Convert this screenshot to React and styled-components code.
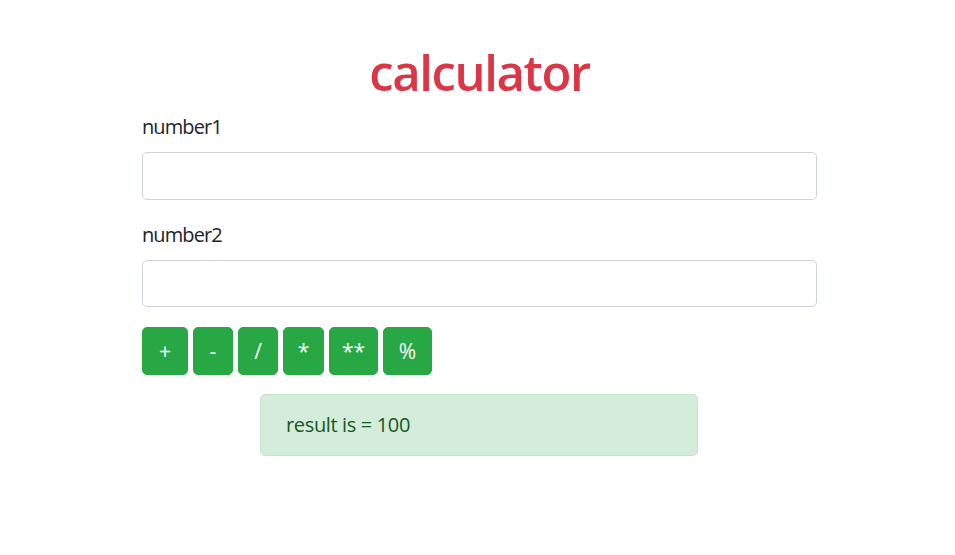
import React from 'react';
import styled, { createGlobalStyle } from 'styled-components';

const GlobalStyle = createGlobalStyle`
    body{
        margin: 0;
        background: #fff;
        font-family: "Open Sans", "Noto Sans", "Liberation Sans", sans-serif;
        color: #212529;
    }
`;

const ops = [
    { label: '+', width: 46 },
    { label: '-', width: 40 },
    { label: '/', width: 40 },
    { label: '*', width: 41 },
    { label: '**', width: 49 },
    { label: '%', width: 49 },
];

export default function App() {
    return (
        <>
            <GlobalStyle />
            <Page>
                <Container>
                    <Title>calculator</Title>
                    <Group>
                        <Label htmlFor="n1">number1</Label>
                        <Input id="n1" type="text" />
                    </Group>
                    <Group>
                        <Label htmlFor="n2">number2</Label>
                        <Input id="n2" type="text" />
                    </Group>
                    <Buttons>
                        {ops.map((op) => (
                            <OpButton key={op.label} width={op.width}>{op.label}</OpButton>
                        ))}
                    </Buttons>
                    <Alert>result is = 100</Alert>
                </Container>
            </Page>
        </>
    );
}

const Page = styled.div`
    padding-top: 42px;
`;
const Container = styled.div`
    width: 675px;
    margin-left: 142px;
`;
const Title = styled.h1`
    margin: 0 0 10px;
    font-size: 49px;
    line-height: 60px;
    font-weight: 600;
    letter-spacing: -1.4px;
    color: #dc3545;
    text-align: center;
`;
const Group = styled.div`
    margin-bottom: 20px;
`;
const Label = styled.label`
    display: block;
    font-size: 20px;
    line-height: 30px;
    letter-spacing: -0.9px;
    margin-bottom: 10px;
    color: #212529;
`;
const Input = styled.input`
    display: block;
    box-sizing: border-box;
    width: 100%;
    height: 47.5px;
    padding: 7px 15px;
    font-size: 20px;
    font-family: inherit;
    border: 1px solid #ced4da;
    border-radius: 5px;
    background: #fff;
    outline: none;
`;
const Buttons = styled.div`
    display: flex;
    gap: 5px;
`;
const OpButton = styled.button`
    box-sizing: border-box;
    width: ${({ width }) => width}px;
    height: 47.5px;
    padding: 0;
    border: 1px solid #28a745;
    border-radius: 5px;
    background: #28a745;
    color: #fff;
    font-family: inherit;
    font-size: 21px;
    line-height: 30px;
    cursor: pointer;
`;
const Alert = styled.div`
    box-sizing: border-box;
    width: 438px;
    margin: 19.5px 0 0 118px;
    padding: 15px 25px;
    font-size: 20px;
    line-height: 30px;
    letter-spacing: -0.35px;
    color: #155724;
    background: #d4edda;
    border: 1px solid #c3e6cb;
    border-radius: 5px;
`;
